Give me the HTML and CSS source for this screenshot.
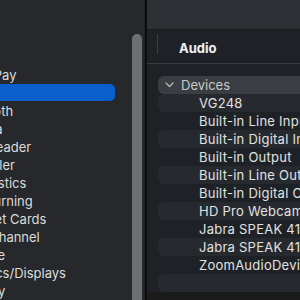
FILE: index.html
```html
<!DOCTYPE html>
<html lang="en">
<head>
    <meta charset="UTF-8">
    <title>System Information</title>
    <link rel="stylesheet" href="styles.css">
</head>
<body>
    <div class="sidebar">
        <ul class="side-list">
            <li>ATA</li>
            <li>Apple Pay</li>
            <li class="selected">Audio</li>
            <li>Bluetooth</li>
            <li>Camera</li>
            <li>Card Reader</li>
            <li>Controller</li>
            <li>Diagnostics</li>
            <li>Disc Burning</li>
            <li>Ethernet Cards</li>
            <li>Fibre Channel</li>
            <li>FireWire</li>
            <li>Graphics/Displays</li>
            <li>Memory</li>
        </ul>
        <div class="scroll-track">
            <div class="scroll-thumb"></div>
        </div>
    </div>
    <div class="divider"></div>
    <div class="main">
        <div class="toolbar"></div>
        <div class="header">
            <span class="header-sep"></span>
            <span class="header-title">Audio</span>
        </div>
        <ul class="tree">
            <li class="group">
                <svg class="chevron" width="9" height="6" viewBox="0 0 9 6"><path d="M1 1 L4.5 4.5 L8 1" fill="none" stroke="#b4b4b4" stroke-width="1.4" stroke-linecap="round" stroke-linejoin="round"/></svg>
                Devices
            </li>
            <li class="item stripe">VG248</li>
            <li class="item">Built-in Line Input</li>
            <li class="item stripe">Built-in Digital Input</li>
            <li class="item">Built-in Output</li>
            <li class="item stripe">Built-in Line Output</li>
            <li class="item">Built-in Digital Output</li>
            <li class="item stripe">HD Pro Webcam C920</li>
            <li class="item">Jabra SPEAK 410 USB</li>
            <li class="item stripe">Jabra SPEAK 410 USB</li>
            <li class="item">ZoomAudioDevice</li>
            <li class="item stripe"></li>
        </ul>
        <div class="footer"></div>
    </div>
</body>
</html>
```

FILE: styles.css
```css
* {
    box-sizing: border-box;
}
body {
    margin: 0;
    width: 300px;
    height: 300px;
    overflow: hidden;
    display: flex;
    font-family: Inter, "Noto Sans", sans-serif;
    font-size: 13px;
    background: #26282b;
}

.sidebar {
    width: 145px;
    flex: none;
    display: flex;
    background: #26282b;
}
.side-list {
    flex: 1;
    list-style: none;
    margin: 0;
    padding: 48px 0 0 0;
    overflow: hidden;
}
.side-list li {
    height: 18px;
    line-height: 18px;
    color: #dcdcdc;
    margin-left: -45.5px;
    white-space: nowrap;
}
.side-list li.selected {
    background: #0b5fcc;
    color: #0b5fcc;
    border-radius: 0 5px 5px 0;
    margin-right: 15px;
    height: 17px;
    margin-bottom: 1px;
}
.scroll-track {
    width: 15px;
    flex: none;
    display: flex;
    flex-direction: column;
    padding: 34px 3px 0 2px;
    border-right: 1px solid #1f2123;
}
.scroll-thumb {
    flex: 1;
    width: 10px;
    background: #6d7073;
    border-radius: 5px 5px 0 0;
}

.divider {
    width: 2px;
    flex: none;
    background: #0d0d0d;
}

.main {
    flex: 1;
    display: flex;
    flex-direction: column;
    background: #1e2227;
    overflow: hidden;
}
.toolbar {
    height: 30px;
    flex: none;
    background: #2c2f33;
    border-bottom: 1px solid #17191b;
}
.header {
    height: 34px;
    flex: none;
    display: flex;
    align-items: center;
    padding-left: 10px;
    border-bottom: 1px solid #383b3f;
}
.header-sep {
    width: 1px;
    height: 20px;
    background: #3c3f43;
    margin-top: -6px;
}
.header-title {
    margin-left: 21px;
    color: #f2f2f2;
    font-weight: 700;
    margin-top: 2px;
}
.tree {
    list-style: none;
    margin: 0;
    padding: 12px 0 0 11px;
    width: 200px;
    flex: none;
}
.tree li {
    height: 18px;
    line-height: 18px;
    white-space: nowrap;
    border-radius: 6px;
}
.group {
    background: #3a3d41;
    color: #c9c9c9;
    display: flex;
    align-items: center;
    padding-left: 7px;
}
.chevron {
    margin-right: 7px;
}
.item {
    color: #e2e2e2;
    padding-left: 41px;
    letter-spacing: 0.25px;
}
.stripe {
    background: #262a2f;
}
.footer {
    flex: 1;
    background: #1b1b1b;
}
```
